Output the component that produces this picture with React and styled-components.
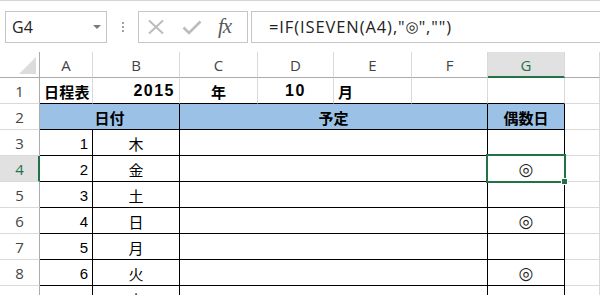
import React from 'react';
import styled, { createGlobalStyle } from 'styled-components';

const GREEN = '#217346';
const GRID = '#d9d9d9';
const HDR = '#ababab';
const BLACK = '#000';

const Global = createGlobalStyle`
  html, body { margin: 0; padding: 0; background: #fff; overflow: hidden; }
  body { width: 600px; height: 295px; font-family: "Open Sans", "Noto Sans CJK JP", sans-serif; }
  * { box-sizing: border-box; }
`;

const Page = styled.div`
  width: 600px;
  height: 295px;
  overflow: hidden;
  display: flex;
  flex-direction: column;
`;

const FormulaBar = styled.div`
  height: 52px;
  flex: none;
  border-top: 1px solid #d4d4d4;
  display: flex;
  align-items: flex-start;
  padding: 10px 0 0 5px;
`;

const NameBox = styled.div`
  width: 102px;
  height: 32px;
  border: 1px solid #c6c6c6;
  display: flex;
  align-items: center;
  padding: 0 5px 0 6px;
  font-size: 16px;
  color: #222;
`;

const DropArrow = styled.span`
  margin-left: auto;
  width: 0;
  height: 0;
  border-left: 4px solid transparent;
  border-right: 4px solid transparent;
  border-top: 4px solid #7a7a7a;
`;

const Grip = styled.div`
  width: 31px;
  height: 32px;
  display: flex;
  flex-direction: column;
  align-items: center;
  justify-content: center;
  gap: 2px;
`;

const GripDot = styled.span`
  width: 2px;
  height: 2px;
  background: #a0a0a0;
`;

const FxBox = styled.div`
  width: 110px;
  height: 32px;
  border: 1px solid #c6c6c6;
  display: flex;
  align-items: center;
  padding-left: 8px;
  gap: 17px;
`;

const FxText = styled.span`
  font-family: "Liberation Serif", "DejaVu Serif", serif;
  font-style: italic;
  font-size: 21px;
  color: #595959;
  margin-left: -1px;
  letter-spacing: -1px;
  line-height: 1;
  padding-bottom: 2px;
`;

const FormulaInput = styled.div`
  flex: 1;
  margin-left: 3px;
  height: 32px;
  border: 1px solid #c6c6c6;
  border-right: none;
  display: flex;
  align-items: center;
  padding-left: 17px;
  font-size: 16.5px;
  letter-spacing: 0.9px;
  color: #222;
  white-space: nowrap;
  line-height: 1;
`;

const Mark = styled.span`
  font-family: "DejaVu Sans", "Noto Sans CJK JP", sans-serif;
  font-size: ${(p) => p.$size || 12}px;
  line-height: 1;
  letter-spacing: 0;
  margin: 0 ${(p) => p.$gap || 0}px;
  color: ${(p) => p.$color || '#222'};
`;

const Sheet = styled.div`
  display: grid;
  grid-template-columns: 40px 53px 87px 78px 76px 78px 76px 77px 1fr;
  grid-auto-rows: 26px;
`;

const Corner = styled.div`
  border-right: 1px solid ${HDR};
  border-bottom: 1px solid ${HDR};
  display: flex;
  justify-content: flex-end;
  align-items: flex-end;
  padding: 0 2px 2px 0;
`;

const ColHead = styled.div`
  border-right: 1px solid ${GRID};
  border-bottom: ${(p) => (p.$sel ? `2px solid ${GREEN}` : `1px solid ${HDR}`)};
  background: ${(p) => (p.$sel ? '#e1e1e1' : '#fff')};
  color: ${(p) => (p.$sel ? GREEN : '#444')};
  display: flex;
  align-items: center;
  justify-content: center;
  font-size: 15px;
  padding-top: ${(p) => (p.$sel ? 1 : 0)}px;
`;

const RowHead = styled.div`
  border-right: ${(p) => (p.$sel ? `2px solid ${GREEN}` : `1px solid ${HDR}`)};
  border-bottom: 1px solid ${GRID};
  background: ${(p) => (p.$sel ? '#e1e1e1' : '#fff')};
  color: ${(p) => (p.$sel ? GREEN : '#444')};
  display: flex;
  align-items: center;
  justify-content: center;
  font-size: 15px;
  padding-left: ${(p) => (p.$sel ? 1 : 0)}px;
`;

const Cell = styled.div`
  position: relative;
  grid-column: span ${(p) => p.$span || 1};
  border-right: 1px solid ${(p) => p.$r || GRID};
  border-bottom: 1px solid ${(p) => p.$b || GRID};
  background: ${(p) => p.$bg || 'transparent'};
  display: flex;
  align-items: center;
  justify-content: ${(p) => p.$align || 'flex-start'};
  padding: 1px ${(p) => p.$pr ?? 3}px 0 ${(p) => p.$pl ?? 3}px;
  font-family: ${(p) => (p.$cjk ? '"Noto Sans CJK JP", sans-serif' : '"Liberation Sans", "Noto Sans CJK JP", sans-serif')};
  font-weight: ${(p) => (p.$bold ? 700 : 400)};
  font-size: ${(p) => p.$size || 15}px;
  letter-spacing: ${(p) => p.$ls || 0}px;
  color: #000;
  white-space: nowrap;
`;

const Selection = styled.div`
  position: absolute;
  left: -2px;
  top: -2px;
  right: -2px;
  bottom: -2px;
  border: 2px solid ${GREEN};
  z-index: 2;
  pointer-events: none;
`;

const Handle = styled.div`
  position: absolute;
  right: -4px;
  bottom: -4px;
  width: 7px;
  height: 7px;
  background: ${GREEN};
  border: 1px solid #fff;
  z-index: 3;
`;

const CrossIcon = () => (
  <svg width="18" height="16" viewBox="0 0 18 16">
    <path d="M2 1.5 L16 14.5 M16 1.5 L2 14.5" stroke="#bcbcbc" strokeWidth="2" fill="none" />
  </svg>
);

const CheckIcon = () => (
  <svg width="20" height="15" viewBox="0 0 20 15">
    <path d="M1.5 7.5 L7 13 L18.5 1.5" stroke="#bcbcbc" strokeWidth="2.6" fill="none" />
  </svg>
);

const CornerTriangle = () => (
  <svg width="18" height="18" viewBox="0 0 18 18">
    <path d="M17 0 L17 17 L0 17 Z" fill="#dcdcdc" />
  </svg>
);

const cols = ['A', 'B', 'C', 'D', 'E', 'F', 'G'];

const body = [
  { n: 3, a: 1, b: '木', g: false },
  { n: 4, a: 2, b: '金', g: true, sel: true },
  { n: 5, a: 3, b: '土', g: false },
  { n: 6, a: 4, b: '日', g: true },
  { n: 7, a: 5, b: '月', g: false },
  { n: 8, a: 6, b: '火', g: true },
  { n: 9, a: 7, b: '水', g: false },
];

export default function App() {
  return (
    <Page>
      <Global />
      <FormulaBar>
        <NameBox>
          G4
          <DropArrow />
        </NameBox>
        <Grip>
          <GripDot />
          <GripDot />
          <GripDot />
        </Grip>
        <FxBox>
          <CrossIcon />
          <CheckIcon />
          <FxText>fx</FxText>
        </FxBox>
        <FormulaInput>
          =IF(ISEVEN(A4),"<Mark $size={15}>◎</Mark>","")
        </FormulaInput>
      </FormulaBar>
      <Sheet>
        <Corner>
          <CornerTriangle />
        </Corner>
        {cols.map((c) => (
          <ColHead key={c} $sel={c === 'G'}>
            {c}
          </ColHead>
        ))}
        <ColHead />

        <RowHead>1</RowHead>
        <Cell $b={BLACK} $cjk $bold $pl={4} $ls={0.3}>日程表</Cell>
        <Cell $b={BLACK} $bold $align="flex-end" $pr={4} $size={16} $ls={1.5}>2015</Cell>
        <Cell $b={BLACK} $cjk $bold $align="center">年</Cell>
        <Cell $b={BLACK} $bold $align="center" $size={16} $ls={1.5}>10</Cell>
        <Cell $b={BLACK} $cjk $bold $pl={4}>月</Cell>
        <Cell $b={BLACK} />
        <Cell $b={BLACK} />
        <Cell />

        <RowHead>2</RowHead>
        <Cell $span={2} $bg="#9bc2e6" $r={BLACK} $b={BLACK} $cjk $bold $align="center">日付</Cell>
        <Cell $span={4} $bg="#9bc2e6" $r={BLACK} $b={BLACK} $cjk $bold $align="center">予定</Cell>
        <Cell $bg="#9bc2e6" $r={BLACK} $b={BLACK} $cjk $bold $align="center">偶数日</Cell>
        <Cell />

        {body.map((r) => (
          <React.Fragment key={r.n}>
            <RowHead $sel={r.sel}>{r.n}</RowHead>
            <Cell $r={BLACK} $b={BLACK} $align="flex-end" $pr={4}>{r.a}</Cell>
            <Cell $r={BLACK} $b={BLACK} $cjk $align="center">{r.b}</Cell>
            <Cell $span={4} $r={BLACK} $b={BLACK} />
            <Cell $r={BLACK} $b={BLACK} $align="center" $pl={0} $pr={0}>
              {r.g && <Mark $size={17}>◎</Mark>}
              {r.sel && (
                <>
                  <Selection />
                  <Handle />
                </>
              )}
            </Cell>
            <Cell />
          </React.Fragment>
        ))}
      </Sheet>
    </Page>
  );
}
